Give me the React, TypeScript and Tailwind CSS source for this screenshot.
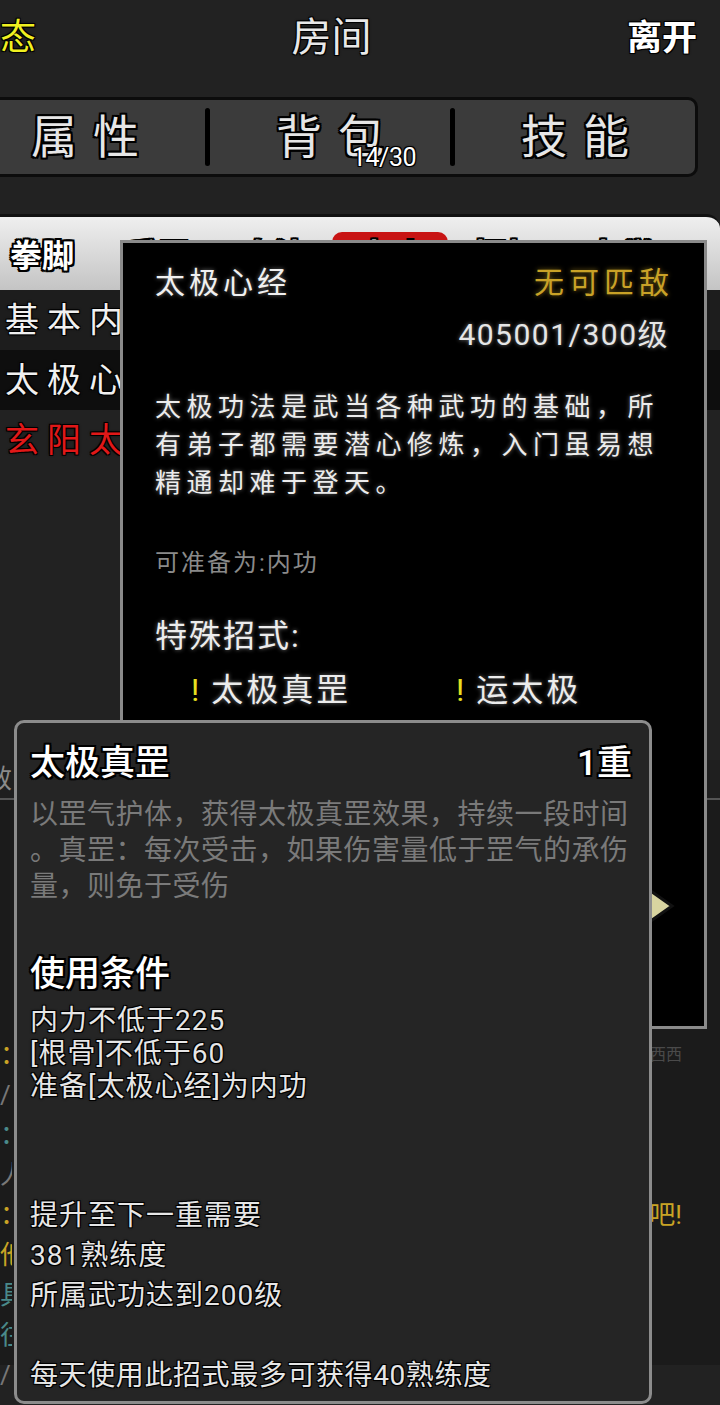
const thick =
  "[text-shadow:-2px_-2px_0_#000,2px_-2px_0_#000,-2px_2px_0_#000,2px_2px_0_#000,0_2px_0_#000,0_-2px_0_#000,2px_0_0_#000,-2px_0_0_#000]";
const thin =
  "[text-shadow:-1px_-1px_0_#000,1px_-1px_0_#000,-1px_1px_0_#000,1px_1px_0_#000,0_0_3px_#000]";
const glow = "[text-shadow:0_0_4px_rgba(255,255,255,0.45)]";
const goldGlow = "[text-shadow:0_0_5px_rgba(210,170,40,0.6)]";

const subTabs = ["拳脚", "兵器", "身法", "内功", "招架", "杂学"];

const rows = [
  { name: "基本内功", bg: "bg-[#1d1d1d]", color: "text-[#f0f0f0]" },
  { name: "太极心经", bg: "bg-[#0e0e0e]", color: "text-[#f0f0f0]" },
  { name: "玄阳太极", bg: "bg-[#222222]", color: "text-[#e01818]" },
];

// chat log: only the edges show beside the popups
const log = [
  { left: "：", color: "text-[#c9a425]", right: "西西西", rightColor: "text-[#4a4a4a] text-[16px]" },
  { left: "/", color: "text-[#777777]" },
  { left: "：", color: "text-[#4a8a8a]" },
  { left: "人", color: "text-[#777777]" },
  { left: "：", color: "text-[#c9a425]", right: "吧!", rightColor: "text-[#c9a425] text-[26px]" },
  { left: "他", color: "text-[#c9a425]" },
  { left: "具", color: "text-[#4a8a8a]" },
  { left: "往", color: "text-[#4a8a8a]" },
  { left: "/", color: "text-[#777777]" },
];

const Tab = ({ label, badge }: { label: string; badge?: string }) => (
  <div className="relative flex h-full flex-1 items-center justify-center">
    <span className={`pl-[16px] text-[46px] leading-none tracking-[16px] text-[#e6e6e6] ${thick}`}>{label}</span>
    {badge && (
      <span className={`absolute left-[142px] top-[45px] text-[25px] leading-none tracking-[-0.5px] text-white ${thin}`}>
        {badge}
      </span>
    )}
  </div>
);

export default function App() {
  return (
    <div className="relative h-[1405px] w-[720px] overflow-hidden bg-[#222222] text-white [font-family:Roboto,'Noto_Sans_CJK_SC',sans-serif]">
      {/* Top bar */}
      <div className="flex h-[76px] items-center justify-between">
        <span className={`-ml-[36px] text-[36px] leading-none text-[#f0f020] ${thin}`}>状态</span>
        <span className={`text-[40px] leading-none text-[#e8e8e8] ${thin}`}>房间</span>
        <span className={`mr-[23px] text-[35px] font-bold leading-none text-white ${thin}`}>离开</span>
      </div>

      {/* Main tabs */}
      <div className="mt-[21px] -ml-[38px] flex h-[80px] w-[736px] items-center rounded-[10px] border-[3px] border-[#0c0c0c] bg-[#3b3b3b]">
        <Tab label="属性" />
        <div className="h-[58px] w-[5px] rounded bg-black" />
        <Tab label="背包" badge="14/30" />
        <div className="h-[58px] w-[5px] rounded bg-black" />
        <Tab label="技能" />
      </div>

      {/* Sub tabs */}
      <div className="mt-[37px] h-[76px] rounded-tr-[14px] border-t-[3px] border-[#111111] bg-linear-to-b from-[#efefef] to-[#c4c4c4]">
        <div className="-ml-[16px] flex pt-[15px]">
          {subTabs.map((t, i) => (
            <div
              key={t}
              className={`flex h-[58px] w-[116px] justify-center pt-[6px] ${i === 3 ? "rounded-t-[10px] bg-[#c81414]" : ""}`}
            >
              <span className={`text-[32px] font-bold leading-[36px] text-white ${thick}`}>{t}</span>
            </div>
          ))}
        </div>
      </div>

      {/* Skill list */}
      {rows.map((r) => (
        <div key={r.name} className={`flex h-[60px] items-center pl-[5px] ${r.bg}`}>
          <span className={`text-[34px] leading-none tracking-[8px] ${r.color} ${thin}`}>{r.name}</span>
        </div>
      ))}
      <div className="h-[290px]" />

      {/* Effect strip */}
      <div className="flex h-[40px] items-center border-b-2 border-[#555555] bg-[#1f1f1f]">
        <span className="-ml-[14px] text-[26px] leading-none text-[#8a8a8a]">效</span>
      </div>

      {/* Chat log */}
      <div className="h-[565px] bg-[#1b1b1b] pt-[235px] text-[26px] leading-[40px]">
        {log.map((l, i) => (
          <div key={i} className="flex h-[40px] items-center justify-between pr-[38px]">
            <span className={`w-[12px] overflow-hidden ${l.color}`}>{l.left}</span>
            {l.right && <span className={`leading-none ${l.rightColor}`}>{l.right}</span>}
          </div>
        ))}
      </div>

      {/* Skill detail popup */}
      <div className="absolute left-[120px] top-[240px] z-10 h-[789px] w-[587px] border-[3px] border-[#8a8a8a] bg-black pl-[32px] pr-[35px] pt-[20px]">
        <div className="flex h-[40px] items-center justify-between">
          <span className={`text-[30px] leading-none tracking-[4px] text-[#f0f0f0] ${glow}`}>太极心经</span>
          <span className={`-mr-[5px] text-[30px] leading-none tracking-[5px] text-[#c9a227] ${goldGlow}`}>无可匹敌</span>
        </div>
        <div className={`mt-[12px] text-right text-[30px] leading-[40px] tracking-[1.5px] text-[#e6e6e6] ${glow}`}>
          405001/300级
        </div>
        <div className={`mt-[33px] text-[26px] leading-[38px] tracking-[5.5px] text-[#ececec] ${glow}`}>
          <div>太极功法是武当各种武功的基础，所</div>
          <div>有弟子都需要潜心修炼，入门虽易想</div>
          <div>精通却难于登天。</div>
        </div>
        <div className="mt-[44px] text-[24px] leading-[34px] tracking-[2px] text-[#8a8a8a]">可准备为:内功</div>
        <div className={`mt-[36px] text-[32px] leading-[40px] tracking-[2px] text-[#ececec] ${glow}`}>特殊招式:</div>
        <div className="mt-[14px] flex pl-[36px] text-[32px] leading-[40px]">
          <div className="flex w-[265px] gap-[12px]">
            <span className="text-[#e8e020]">!</span>
            <span className={`tracking-[3px] text-[#ececec] ${glow}`}>太极真罡</span>
          </div>
          <div className="flex gap-[12px]">
            <span className="text-[#e8e020]">!</span>
            <span className={`tracking-[3px] text-[#ececec] ${glow}`}>运太极</span>
          </div>
        </div>
      </div>

      {/* Page arrow */}
      <svg className="absolute left-[636px] top-[880px] z-10" width="40" height="52" viewBox="0 0 40 52">
        <polygon points="2,2 36,26 2,50" fill="#d8d4a0" stroke="#111111" strokeWidth="3" />
      </svg>

      {/* Move detail popup */}
      <div className="absolute left-[14px] top-[720px] z-20 h-[684px] w-[638px] rounded-[10px] border-[3px] border-[#8c8c8c] bg-[#252525] pl-[13px] pr-[17px] pt-[18px]">
        <div className="flex h-[44px] items-center justify-between">
          <span className={`text-[35px] font-medium leading-none text-white ${thick}`}>太极真罡</span>
          <span className={`text-[35px] font-medium leading-none text-white ${thick}`}>1重</span>
        </div>
        <div className="mt-[12px] whitespace-nowrap text-[28px] leading-[36px] tracking-[0.5px] text-[#7a7a7a]">
          <div>以罡气护体，获得太极真罡效果，持续一段时间</div>
          <div>。真罡：每次受击，如果伤害量低于罡气的承伤</div>
          <div>量，则免于受伤</div>
        </div>
        <div className={`mt-[48px] text-[35px] font-medium leading-[44px] text-white ${thick}`}>使用条件</div>
        <div className={`mt-[7px] text-[28px] leading-[33px] tracking-[1px] text-[#e6e6e6] ${thin}`}>
          <div>内力不低于225</div>
          <div>[根骨]不低于60</div>
          <div>准备[太极心经]为内功</div>
        </div>
        <div className={`mt-[93px] text-[28px] leading-[40px] tracking-[1px] text-[#e6e6e6] ${thin}`}>
          <div>提升至下一重需要</div>
          <div>381熟练度</div>
          <div>所属武功达到200级</div>
        </div>
        <div className={`mt-[40px] whitespace-nowrap text-[28px] leading-[40px] tracking-[0.6px] text-[#e6e6e6] ${thin}`}>
          每天使用此招式最多可获得40熟练度
        </div>
      </div>
    </div>
  );
}
